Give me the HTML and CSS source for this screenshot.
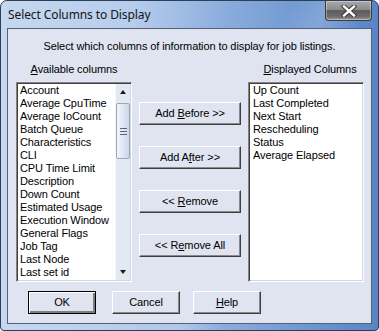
FILE: index.html
```html
<!DOCTYPE html>
<html>
<head>
<meta charset="utf-8">
<link rel="stylesheet" href="styles.css">
</head>
<body>
<div class="window">
  <div class="titlebar">
    <span class="title">Select Columns to Display</span>
    <div class="close">
      <svg width="16" height="12" viewBox="0 0 16 12">
        <path d="M3 1.5 L13 10.5 M13 1.5 L3 10.5" stroke="#3a3a3a" stroke-width="4.4" stroke-linecap="square"/>
        <path d="M3 1.5 L13 10.5 M13 1.5 L3 10.5" stroke="#ffffff" stroke-width="2.4" stroke-linecap="square"/>
      </svg>
    </div>
  </div>
  <div class="client">
    <p class="intro">Select which columns of information to display for job listings.</p>
    <div class="main">
      <div class="col">
        <div class="label"><u>A</u>vailable columns</div>
        <div class="listbox left">
          <ul class="items">
            <li>Account</li>
            <li>Average CpuTime</li>
            <li>Average IoCount</li>
            <li>Batch Queue</li>
            <li>Characteristics</li>
            <li>CLI</li>
            <li>CPU Time Limit</li>
            <li>Description</li>
            <li>Down Count</li>
            <li>Estimated Usage</li>
            <li>Execution Window</li>
            <li>General Flags</li>
            <li>Job Tag</li>
            <li>Last Node</li>
            <li>Last set id</li>
            <li>Last Started</li>
          </ul>
          <div class="scrollbar">
            <div class="arrow up"></div>
            <div class="track">
              <div class="thumb"><span class="grip"></span></div>
            </div>
            <div class="arrow down"></div>
          </div>
        </div>
      </div>
      <div class="actions">
        <div class="btn wide"><span>Add <u>B</u>efore &gt;&gt;</span></div>
        <div class="btn wide"><span>Add A<u>f</u>ter &gt;&gt;</span></div>
        <div class="btn wide"><span>&lt;&lt; <u>R</u>emove</span></div>
        <div class="btn wide"><span>&lt;&lt; R<u>e</u>move All</span></div>
      </div>
      <div class="col">
        <div class="label right-label"><u>D</u>isplayed Columns</div>
        <div class="listbox right">
          <ul class="items">
            <li>Up Count</li>
            <li>Last Completed</li>
            <li>Next Start</li>
            <li>Rescheduling</li>
            <li>Status</li>
            <li>Average Elapsed</li>
          </ul>
        </div>
      </div>
    </div>
    <div class="footer">
      <div class="btn small default"><span>OK</span></div>
      <div class="btn small cancel"><span>Cancel</span></div>
      <div class="btn small help"><span><u>H</u>elp</span></div>
    </div>
  </div>
</div>
</body>
</html>
```

FILE: styles.css
```css
* { box-sizing: border-box; }
html, body { margin: 0; padding: 0; background: #ffffff; }
body { width: 379px; height: 331px; overflow: hidden; }

.window {
  width: 379px;
  height: 331px;
  border-radius: 7px 7px 4px 4px;
  border: 1px solid #2d3e58;
  background:
    linear-gradient(115deg, rgba(255,255,255,0) 55%, rgba(255,255,255,0.18) 62%, rgba(255,255,255,0) 70%),
    linear-gradient(to right, #c6d8ef 0%, #b6cdec 35%, #8aacdc 60%, #6893cf 85%, #5985c7 100%);
  display: flex;
  flex-direction: column;
  padding: 0 6px 6px 6px;
  font-family: "Liberation Sans", Arial, sans-serif;
  font-size: 11px;
  letter-spacing: -0.1px;
  color: #000;
}

.titlebar {
  height: 27px;
  display: flex;
  align-items: flex-start;
  justify-content: space-between;
  flex: none;
}
.title {
  font-family: "Noto Sans", "Liberation Sans", sans-serif;
  font-size: 12px;
  line-height: 14px;
  color: #151515;
  margin-top: 7px;
  margin-left: 1px;
  letter-spacing: -0.1px;
}
.close {
  width: 47px;
  height: 20px;
  border: 1px solid #3b3b3b;
  border-top: none;
  border-radius: 0 0 4px 4px;
  background: linear-gradient(to bottom, #a9a9a9 0%, #8c8c8c 45%, #5d5d5d 50%, #6a6a6a 80%, #9a9a9a 100%);
  box-shadow: inset 0 0 0 1px rgba(255,255,255,0.35);
  display: flex;
  align-items: center;
  justify-content: center;
}

.client {
  flex: 1;
  background: #dfe4f0;
  border: 1px solid #53627a;
  display: flex;
  flex-direction: column;
  padding: 11px 8px 8px 8px;
}

.intro {
  margin: 0;
  text-align: center;
  line-height: 13px;
  height: 13px;
}

.main {
  display: flex;
  margin-top: 10px;
  align-items: flex-start;
}
.col {
  display: flex;
  flex-direction: column;
}
.label {
  text-align: center;
  line-height: 13px;
  height: 13px;
  margin-bottom: 6px;
}
.right-label { padding-left: 8px; }

.listbox {
  height: 200px;
  background: #ffffff;
  border-style: solid;
  border-width: 1px;
  border-color: #828282 #ffffff #ffffff #828282;
  box-shadow: inset 1px 1px 0 #404040, inset -1px -1px 0 #cfd6e3;
  display: flex;
  overflow: hidden;
  padding: 1px;
}
.listbox.left { width: 116px; }
.listbox.right { width: 116px; }

.items {
  list-style: none;
  margin: 0;
  padding: 0 0 0 2px;
  flex: 1;
  overflow: hidden;
}
.listbox.right .items { padding-left: 3px; }
.items li {
  line-height: 13px;
  height: 13px;
  white-space: nowrap;
}

.scrollbar {
  width: 15px;
  flex: none;
  background: #e3e9f3;
  display: flex;
  flex-direction: column;
  border-left: 1px solid #f3f6fa;
}
.arrow {
  height: 16px;
  flex: none;
  position: relative;
}
.arrow::after {
  content: "";
  position: absolute;
  left: 4px;
  width: 0;
  height: 0;
  border-left: 3.5px solid transparent;
  border-right: 3.5px solid transparent;
}
.arrow.up::after { top: 6px; border-bottom: 4px solid #1a1a1a; }
.arrow.down::after { top: 6px; border-top: 4px solid #1a1a1a; }
.track {
  flex: 1;
  padding-top: 3px;
}
.thumb {
  width: 14px;
  height: 56px;
  border: 1px solid #9aa6b8;
  border-radius: 2px;
  background: linear-gradient(to right, #f4f7fb 0%, #dfe7f3 50%, #c9d6ea 100%);
  display: flex;
  align-items: center;
  justify-content: center;
}
.grip {
  width: 7px;
  height: 7px;
  background: linear-gradient(to bottom, #5c6670 0 1px, transparent 1px 3px, #5c6670 3px 4px, transparent 4px 6px, #5c6670 6px 7px);
}

.actions {
  display: flex;
  flex-direction: column;
  gap: 21px;
  padding-top: 39px;
  margin-left: 7px;
  margin-right: 7px;
}

.btn {
  height: 23px;
  display: flex;
  align-items: center;
  justify-content: center;
  background: #dfe4f0;
  border-style: solid;
  border-width: 1px;
  border-color: #ffffff #3e3e3e #3e3e3e #ffffff;
  box-shadow: inset -1px -1px 0 #8a8a8a;
  line-height: 13px;
  white-space: nowrap;
}
.btn.wide { width: 102px; }

.footer {
  display: flex;
  margin-top: 9px;
  padding-left: 12px;
}
.btn.small { width: 68px; height: 23px; }
.btn.default {
  border: 1px solid #000;
  box-shadow: inset 1px 1px 0 #ffffff, inset -2px -2px 0 #7e7e7e;
}
.btn.cancel { margin-left: 16px; }
.btn.help { margin-left: 13px; }
```
